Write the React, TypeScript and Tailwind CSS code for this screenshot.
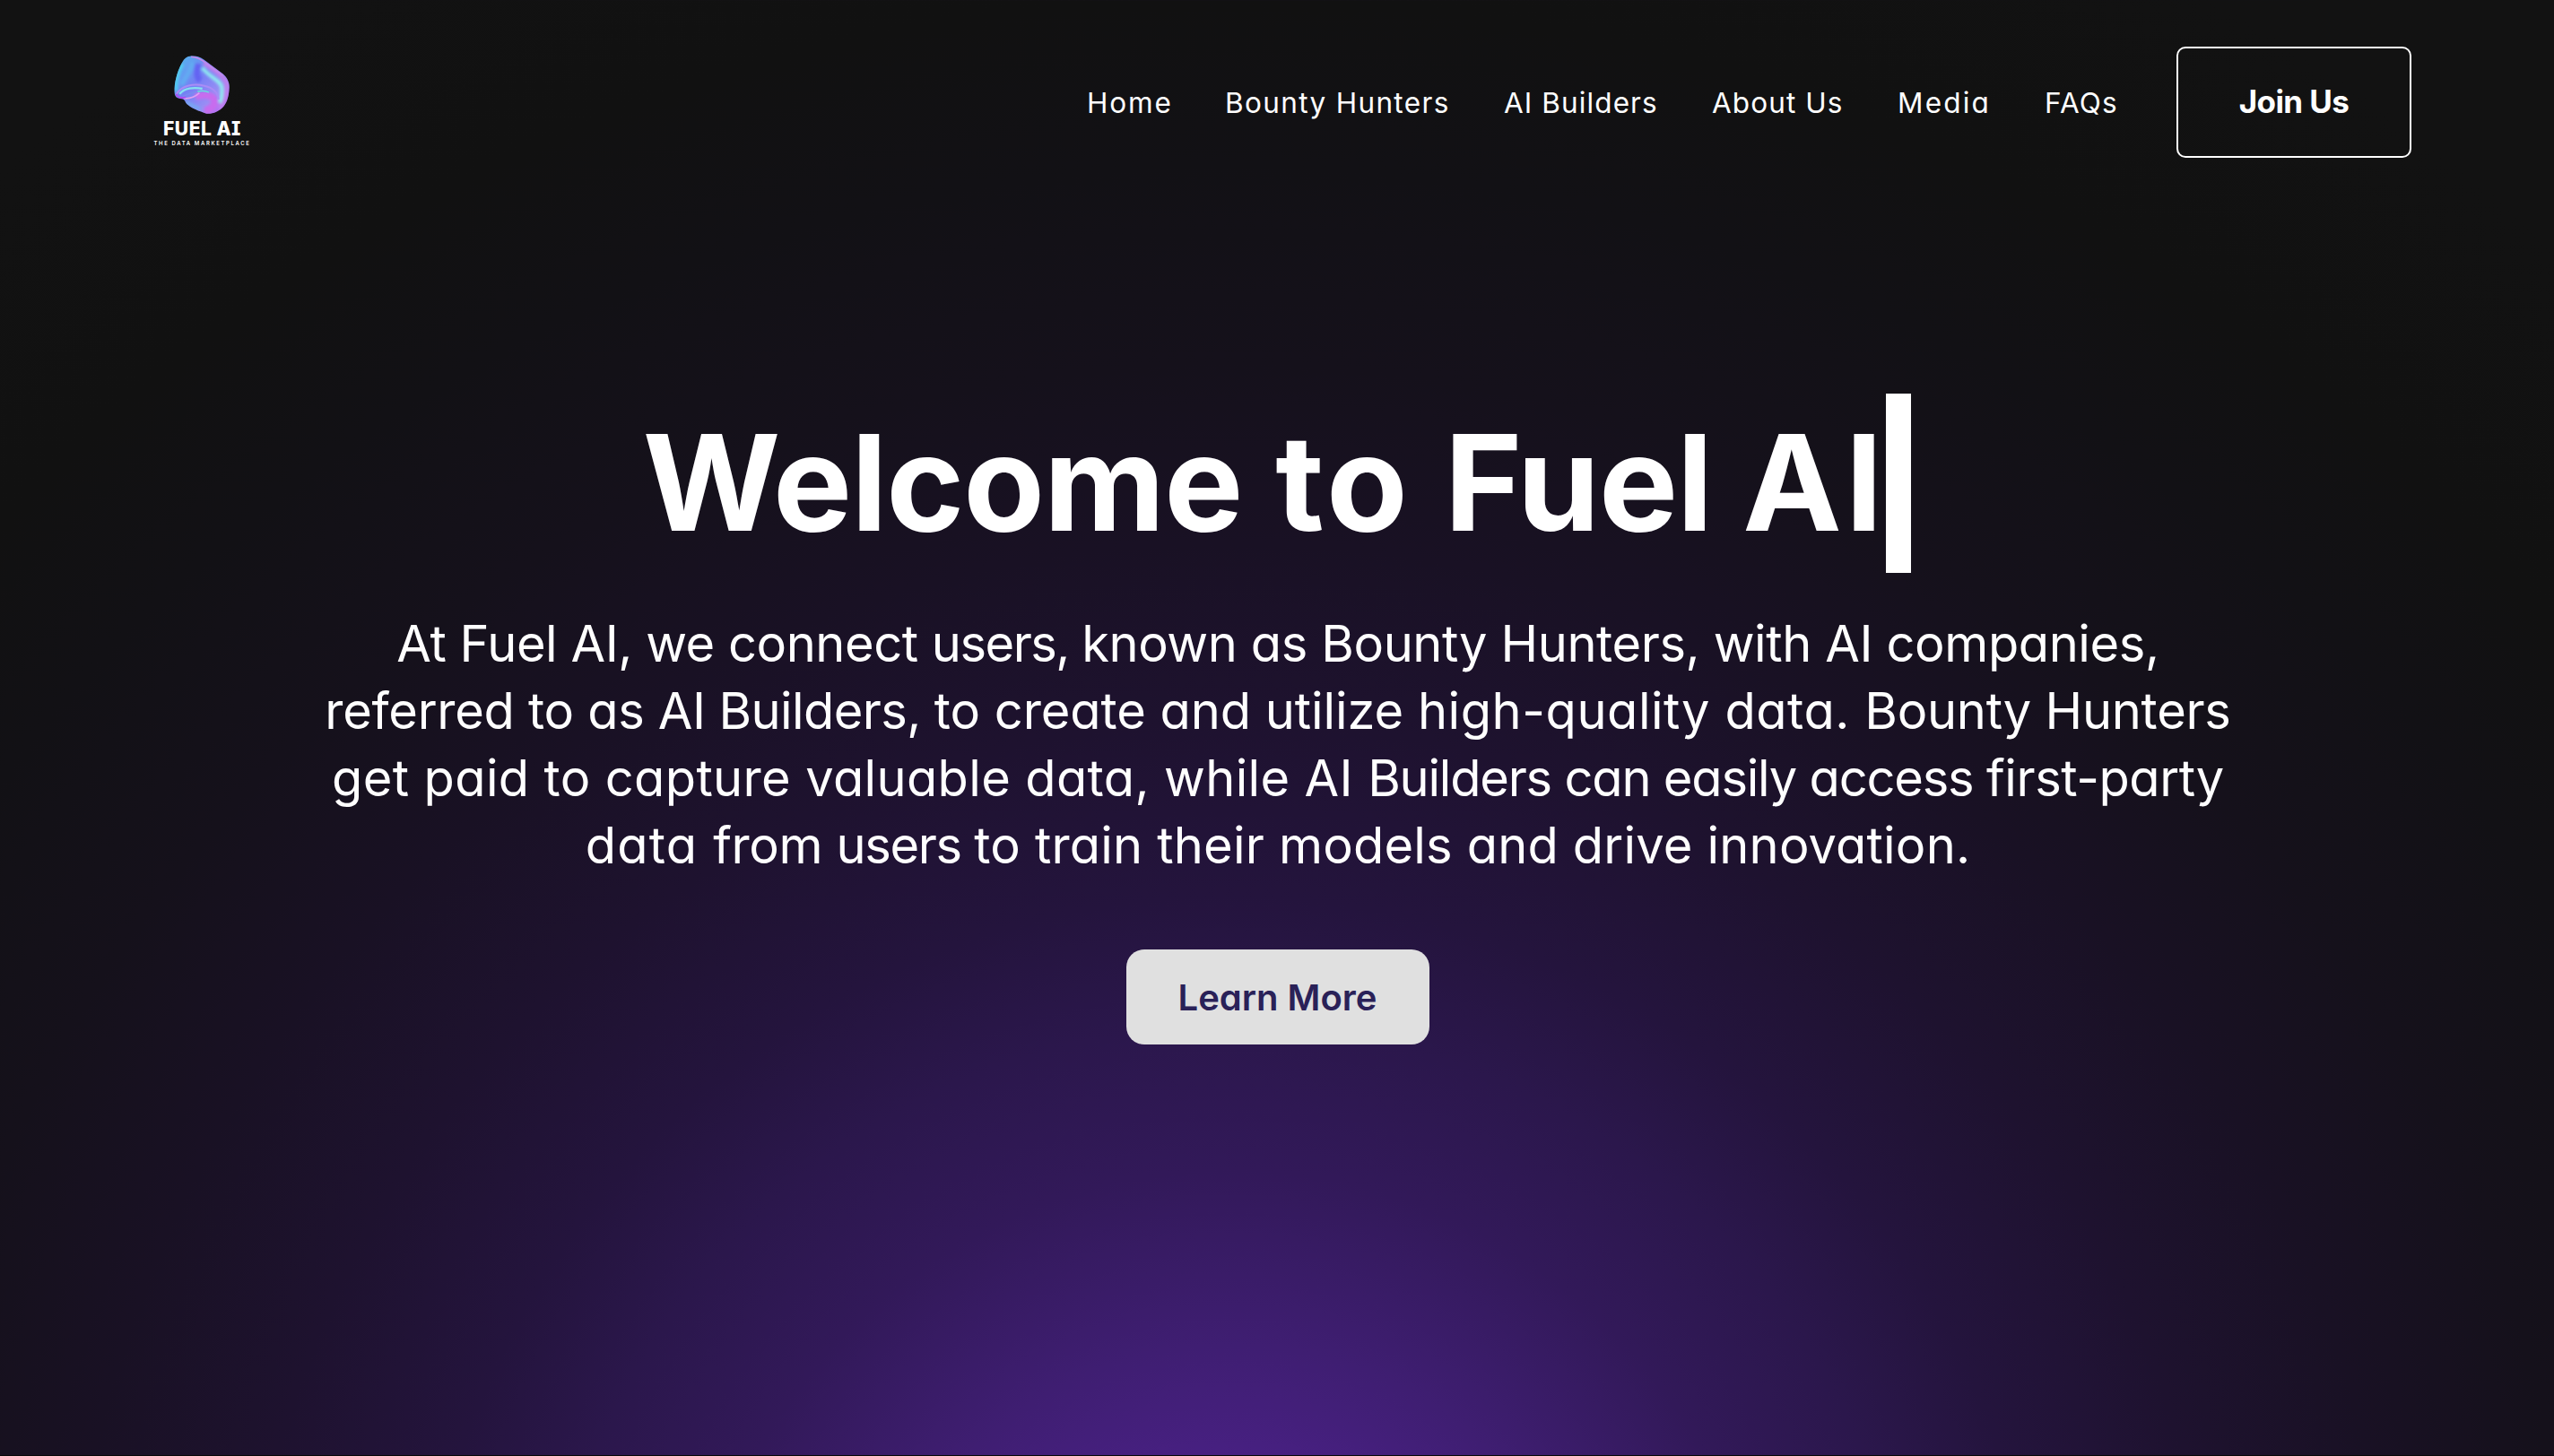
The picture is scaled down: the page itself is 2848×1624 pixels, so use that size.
const navItems = [
  { label: "Home", cls: "w-[154px] tracking-[1.9px]" },
  { label: "Bounty Hunters", cls: "w-[311px] tracking-[1.35px]" },
  { label: "AI Builders", cls: "w-[232px] tracking-[1.1px]" },
  { label: "About Us", cls: "w-[207px] tracking-[1.1px]" },
  { label: "Media", cls: "w-[164px] tracking-[2.2px]" },
  { label: "FAQs", cls: "w-[147px] tracking-[1.2px]" },
];

const headingWords = [
  { text: "Welcome", cls: "tracking-[-1px]" },
  { text: "to", cls: "ml-[37px] tracking-[4px]" },
  { text: "Fuel", cls: "ml-[37px] tracking-[-1px]" },
  { text: "AI", cls: "ml-[34px] tracking-[4px]" },
];

// Each line is a run of phrases with its own tracking.
const introLines = [
  [
    { text: "At Fuel AI, we connect ", cls: "tracking-[-0.46px]" },
    { text: "users, ", cls: "tracking-[-1.5px]" },
    { text: "known as Bounty Hunters, with ", cls: "tracking-[-0.4px]" },
    { text: "AI companies,", cls: "tracking-[-0.4px]" },
  ],
  [
    { text: "referred to as ", cls: "tracking-[-0.3px]" },
    { text: "AI Builders, ", cls: "tracking-[-0.6px]" },
    { text: "to create and utilize ", cls: "tracking-[-0.06px]" },
    { text: "high-quality data. ", cls: "tracking-[0.55px]" },
    { text: "Bounty Hunters", cls: "tracking-[-0.25px]" },
  ],
  [
    { text: "get paid to capture valuable data, while AI ", cls: "tracking-[0.36px]" },
    { text: "Builders can easily access ", cls: "tracking-[-1.2px]" },
    { text: "first-party", cls: "tracking-[-0.4px]" },
  ],
  [
    { text: "data ", cls: "tracking-[1.2px]" },
    { text: "from ", cls: "tracking-[-0.4px]" },
    { text: "users ", cls: "tracking-[-1.3px]" },
    { text: "to train their models and drive innovation.", cls: "tracking-[0.19px]" },
  ],
];

function Blob() {
  return (
    <svg className="h-[65px] w-[62px]" viewBox="133 67 186 195" fill="none">
      <defs>
        <linearGradient id="base" x1="140" y1="90" x2="310" y2="240" gradientUnits="userSpaceOnUse">
          <stop offset="0" stopColor="#55b4ee" />
          <stop offset="0.4" stopColor="#7480f4" />
          <stop offset="0.75" stopColor="#9a8ef4" />
          <stop offset="1" stopColor="#bd66f2" />
        </linearGradient>
        <clipPath id="shape">
          <path d="M185 69C200 66 218 70 232 80L290 123C308 136 319 152 318 175C317 200 312 222 299 237C284 254 262 263 242 261C218 254 190 242 176 229C168 218 168 213 158 212C142 211 135 204 134 188C134 160 143 122 158 94C165 80 172 71 185 69Z" />
        </clipPath>
        <filter id="soft" x="-30%" y="-30%" width="160%" height="160%">
          <feGaussianBlur stdDeviation="5" />
        </filter>
        <filter id="fine" x="-30%" y="-30%" width="160%" height="160%">
          <feGaussianBlur stdDeviation="2" />
        </filter>
      </defs>
      <g clipPath="url(#shape)">
        <rect x="130" y="60" width="195" height="205" fill="url(#base)" />
        <g filter="url(#soft)">
          <path d="M160 95C145 125 138 155 140 185" stroke="#50d0ee" strokeWidth="12" />
          <path d="M195 88C190 120 170 140 158 165" stroke="#62aaf2" strokeWidth="16" />
          <path d="M214 95C210 120 205 140 222 150" stroke="#6464f2" strokeWidth="20" />
          <path d="M232 92C262 112 300 135 309 160C313 190 300 225 285 245" stroke="#bd80ee" strokeWidth="14" />
          <path d="M228 108C250 140 292 150 293 175C295 200 290 215 286 225" stroke="#8feaf0" strokeWidth="12" />
          <path d="M205 205C235 195 262 200 268 215C272 235 255 250 235 250" stroke="#c86cee" strokeWidth="24" />
          <path d="M172 222C190 235 205 240 220 246" stroke="#78a6f2" strokeWidth="14" />
        </g>
        <g filter="url(#fine)">
          <path d="M190 71C210 70 225 80 240 92L296 134" stroke="#c08aec" strokeWidth="5" />
          <path d="M141 196C160 165 200 160 235 168C262 174 280 190 282 214" stroke="#a98cf6" strokeWidth="6" />
          <path d="M152 195C168 175 200 172 228 178" stroke="#86dff0" strokeWidth="7" />
          <path d="M162 205C185 190 225 182 252 188" stroke="#7a8cf0" strokeWidth="4" />
          <path d="M165 210C185 212 205 204 218 192" stroke="#e0a0f2" strokeWidth="5" />
          <path d="M212 187C225 184 240 185 250 190" stroke="#6ae8dc" strokeWidth="4" />
          <path d="M140 196C146 208 160 210 172 206" stroke="#b04df0" strokeWidth="6" />
        </g>
      </g>
    </svg>
  );
}

export default function App() {
  return (
    <div className="flex h-[1624px] w-[2848px] flex-col overflow-hidden border-b border-black/50 bg-[radial-gradient(circle_at_1372px_1905px,#4b2188_0px,#472081_281px,#3f1e72_405px,#321959_600px,#2b174c_760px,#24143d_905px,#1e122f_1100px,#191124_1300px,#15111b_1500px,#121115_1720px,#111111_1905px,#121212_2200px)] font-['Inter',sans-serif] text-white [font-feature-settings:'cv11']">
      <header className="flex h-[227px] items-center justify-between pr-[159px] pl-[172px]">
        <a className="flex w-[106px] flex-col items-center">
          <Blob />
          <span className="mt-[7px] -mr-[1px] text-[21px] leading-[20px] font-extrabold tracking-[0.5px] whitespace-nowrap [font-feature-settings:'cv08']">
            FUEL AI
          </span>
          <span className="mt-px -mr-[1px] text-[6px] leading-[10px] font-semibold tracking-[1.6px] whitespace-nowrap">
            THE DATA MARKETPLACE
          </span>
        </a>
        <div className="flex items-center">
          <nav className="flex pt-[2px] text-[31.5px]">
            {navItems.map((item) => (
              <a key={item.label} className={`shrink-0 whitespace-nowrap ${item.cls}`}>
                {item.label}
              </a>
            ))}
          </nav>
          <button className="h-[124px] w-[262px] rounded-[10px] border-2 border-white text-[35px] font-bold tracking-[-0.6px]">
            Join Us
          </button>
        </div>
      </header>

      <main className="mt-[212px] flex flex-col items-center">
        <h1 className="flex h-[200px] items-center text-[148px] leading-[202px] font-bold">
          {headingWords.map((word) => (
            <span key={word.text} className={word.cls}>
              {word.text}
            </span>
          ))}
          <span className="h-[200px] w-[28px] bg-white" />
        </h1>
        <p className="mt-[42px] ml-[2px] text-center text-[56px] leading-[75px]">
          {introLines.map((line) => (
            <span key={line[0].text} className="block whitespace-pre">
              {line.map((part) => (
                <span key={part.text} className={part.cls}>
                  {part.text}
                </span>
              ))}
            </span>
          ))}
        </p>
        <button className="mt-[78px] ml-px h-[106px] w-[338px] rounded-[20px] bg-[#e0e0e0] pt-[2px] text-[40px] font-semibold text-[#2a2158]">
          Learn More
        </button>
      </main>
    </div>
  );
}
